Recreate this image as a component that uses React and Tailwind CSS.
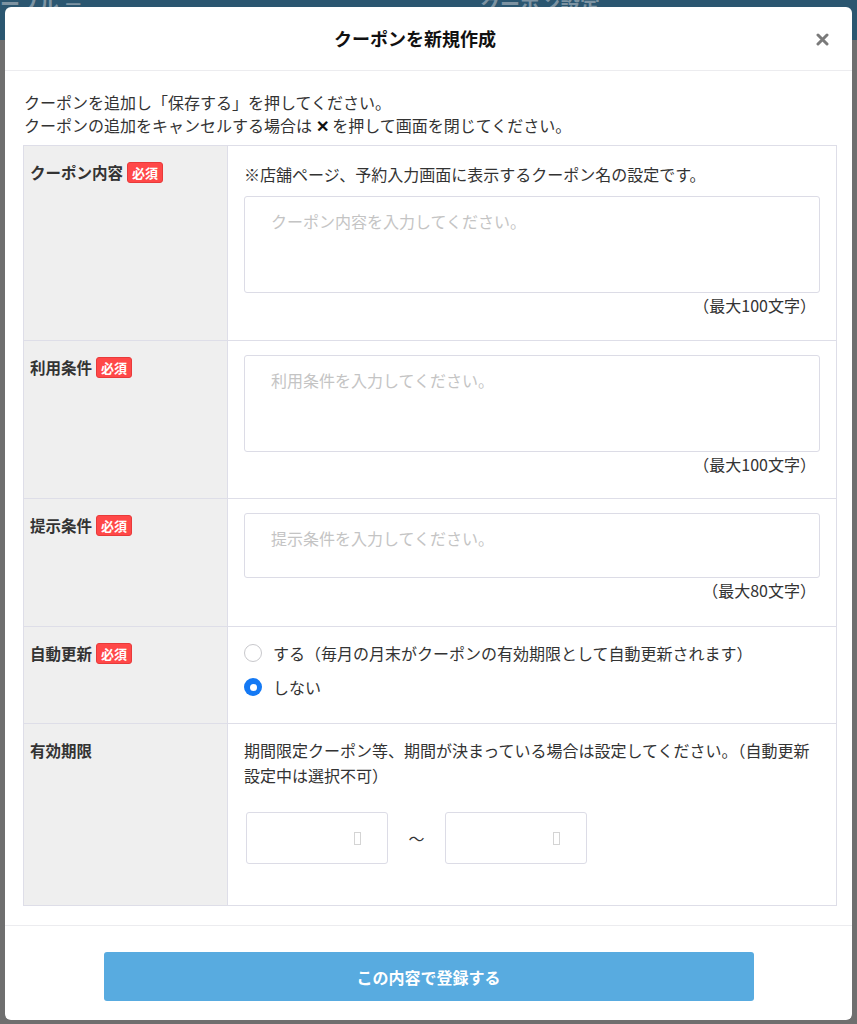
import React, { useState } from "react";

const font = { fontFamily: '"Noto Sans CJK JP", "Noto Sans", sans-serif' };

const Required = () => (
  <span className="ml-1 inline-flex h-[21px] items-center rounded-[3px] border border-[#e83a3a] bg-[#ff4848] px-[4px] text-[13px] font-bold leading-none text-white">
    必須
  </span>
);

const Row = ({ label, required, children, contentClass = "" }) => (
  <div className="flex border-t border-[#dedee8] first:border-t-0">
    <div className="w-[204px] shrink-0 border-r border-[#dedee8] bg-[#efefef] pl-[6px] pt-[12px]">
      <div className="flex items-center text-[15.5px] font-bold leading-[28px] text-[#333]">
        {label}
        {required && <Required />}
      </div>
    </div>
    <div className={"flex-1 px-4 pt-[14px] " + contentClass}>{children}</div>
  </div>
);

const TextBox = ({ placeholder, height }) => (
  <textarea
    placeholder={placeholder}
    className={
      "block w-full resize-none rounded-[3px] border border-[#dcdce6] bg-white px-[26px] py-[12px] text-[16px] leading-[24px] text-[#333] outline-none placeholder:text-[#c4c4c4] " +
      height
    }
  />
);

const Count = ({ children }) => (
  <p className="pr-[4px] text-right text-[16px] leading-[24px] text-[#333]">{children}</p>
);

const Radio = ({ checked, onClick, children }) => (
  <label onClick={onClick} className="flex cursor-pointer items-center gap-[11px] text-[16px] leading-[24px] text-[#333]">
    {checked ? (
      <span className="flex h-[18px] w-[18px] items-center justify-center rounded-full bg-[#1479f4]">
        <span className="h-[7px] w-[7px] rounded-full bg-white" />
      </span>
    ) : (
      <span className="h-[18px] w-[18px] rounded-full border border-[#c8c8cc] bg-white" />
    )}
    {children}
  </label>
);

const DateBox = () => (
  <div className="flex h-[52px] w-[142px] items-center justify-end rounded-[3px] border border-[#dcdce6] bg-white pr-[26px]">
    <span className="h-[13px] w-[7px] border border-[#d4d4d4]" />
  </div>
);

export default function App() {
  const [autoRenew, setAutoRenew] = useState(false);

  return (
    <div style={font} className="relative h-[1024px] w-[857px] overflow-hidden bg-[#6f6f6f]">
      {/* page header behind the overlay */}
      <div className="relative h-[40px] bg-[#2b5670] text-[20px] font-bold leading-[24px] text-[#7d93a2]">
        <span className="absolute left-0 top-[-8px]">ーブル ≡</span>
        <span className="absolute left-[480px] top-[-8px]">クーポン設定</span>
      </div>

      {/* modal */}
      <div className="absolute left-[5px] top-[7px] w-[847px] rounded-[6px] bg-white">
        <div className="flex h-[64px] items-center border-b border-[#ececef] px-4">
          <h2 className="flex-1 text-center text-[18px] font-bold text-[#111]">クーポンを新規作成</h2>
          <button className="flex w-[27px] items-center justify-center pt-[2px]">
            <svg width="13" height="13" viewBox="0 0 13 13">
              <path d="M2 2 L11 11 M11 2 L2 11" stroke="#7a7a7a" strokeWidth="3" strokeLinecap="round" />
            </svg>
          </button>
        </div>

        <div className="pb-[19px] pl-[18px] pr-[15px] pt-[20px]">
          <p className="pl-[1px] text-[16px] leading-[23px] text-[#333]">
            クーポンを追加し「保存する」を押してください。
            <br />
            クーポンの追加をキャンセルする場合は <span className="font-bold text-[#111]">✕</span> を押して画面を閉じてください。
          </p>

          <div className="mt-[8px] border border-[#dedee8]">
            <Row label="クーポン内容" required contentClass="pb-[23px]">
              <p className="text-[16px] leading-[28px] text-[#333]">※店舗ページ、予約入力画面に表示するクーポン名の設定です。</p>
              <div className="mt-[8px]">
                <TextBox placeholder="クーポン内容を入力してください。" height="h-[97px]" />
              </div>
              <Count>（最大100文字）</Count>
            </Row>

            <Row label="利用条件" required contentClass="pb-[22px]">
              <TextBox placeholder="利用条件を入力してください。" height="h-[97px]" />
              <Count>（最大100文字）</Count>
            </Row>

            <Row label="提示条件" required contentClass="pb-[24px]">
              <TextBox placeholder="提示条件を入力してください。" height="h-[65px]" />
              <Count>（最大80文字）</Count>
            </Row>

            <Row label="自動更新" required contentClass="pb-6">
              <div className="flex flex-col gap-[10px]">
                <Radio checked={autoRenew} onClick={() => setAutoRenew(true)}>
                  する（毎月の月末がクーポンの有効期限として自動更新されます）
                </Radio>
                <Radio checked={!autoRenew} onClick={() => setAutoRenew(false)}>
                  しない
                </Radio>
              </div>
            </Row>

            <Row label="有効期限" contentClass="pb-[41px]">
              <p className="pr-[6px] text-[16px] leading-[25px] text-[#333]">
                期間限定クーポン等、期間が決まっている場合は設定してください。（自動更新設定中は選択不可）
              </p>
              <div className="mt-[24px] flex items-center pl-[2px]">
                <DateBox />
                <span className="w-[57px] text-center text-[16px] text-[#333]">〜</span>
                <DateBox />
              </div>
            </Row>
          </div>
        </div>

        <div className="border-t border-[#ececef] pb-[19px] pt-[26px]">
          <button className="mx-auto block h-[49px] w-[650px] rounded-[3px] bg-[#58abe0] text-[16px] font-bold text-white">
            この内容で登録する
          </button>
        </div>
      </div>
    </div>
  );
}
